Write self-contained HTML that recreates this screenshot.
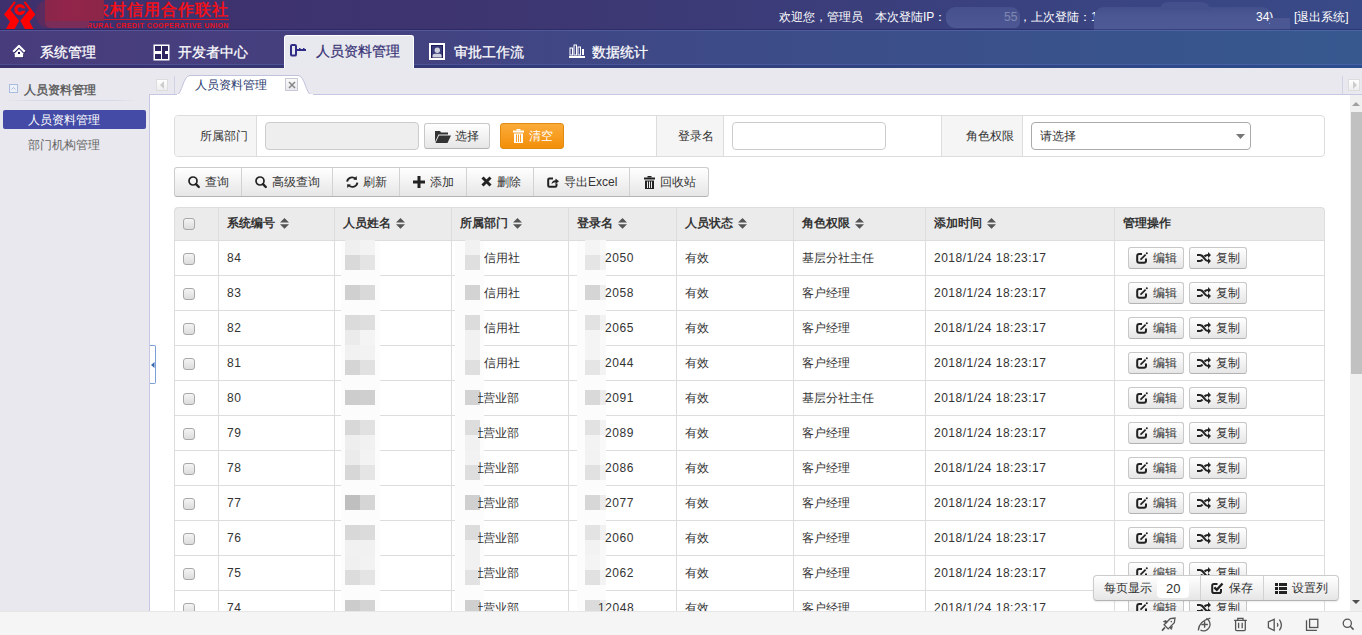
<!DOCTYPE html>
<html><head><meta charset="utf-8">
<style>
*{box-sizing:border-box;margin:0;padding:0}
body{width:1362px;height:635px;overflow:hidden;position:relative;font-family:"Liberation Sans",sans-serif;font-size:12px;color:#333;background:#fff}
.a{position:absolute}
#top{left:0;top:0;width:1362px;height:30px;background:linear-gradient(to right,#3e306d 0%,#3d3570 35%,#3a3f7c 65%,#394a88 100%)}
#nav{left:0;top:30px;width:1362px;height:38px;background:linear-gradient(to right,#483c7c 0%,#45407f 25%,#3d4a87 50%,#36588f 100%);border-top:1px solid rgba(120,135,215,.32)}
#nav .strip{left:0;top:33px;width:1362px;height:5px;background:linear-gradient(to right,#392f6c,#313f7c 50%,#2c4d8c);border-top:1px solid rgba(120,135,215,.35);border-bottom:1px solid rgba(10,20,80,.45)}
.nt{position:absolute;top:13px;color:#fff;font-size:14px;line-height:16px;white-space:nowrap;-webkit-text-stroke:0.25px #fff}
#side{left:0;top:68px;width:149px;height:543px;background:#e8e8ee}
#main{left:149px;top:68px;width:1213px;height:543px;background:#e8e8ee}
#status{left:0;top:611px;width:1362px;height:24px;background:#f5f5f5;border-top:1px solid #e6e6e6}
.btn{position:absolute;height:25px;border:1px solid #c8c8c8;border-bottom-color:#b3b3b3;border-radius:3px;background:linear-gradient(#ffffff,#e6e6e6);}
.lbl{position:absolute;white-space:nowrap;line-height:14px}
table{border-collapse:collapse}
</style></head><body>

<div id="top" class="a">
  <svg class="a" style="left:0;top:0" width="40" height="30" viewBox="0 0 40 30">
    <path d="M14.3 1.2 L15.8 2.6 L10.4 10 L19.2 20.7 L14.6 29 L6 29 L10 21.6 L4 14.6 Z" fill="#f00"/>
    <path d="M25.2 1.2 L23.7 2.6 L29.1 10 L20.3 20.7 L24.9 29 L33.5 29 L29.5 21.6 L35.5 14.6 Z" fill="#f00"/>
    <circle cx="19.9" cy="9.6" r="5.6" fill="#f00"/>
    <circle cx="19.9" cy="9.6" r="2.4" fill="#3f3371"/>
    <rect x="19.9" y="8.3" width="6" height="2.5" fill="#3f3371"/>
  </svg>
  <div class="a" style="left:93px;top:2px;color:#f0101a;font-size:16px;font-weight:bold;line-height:16px;letter-spacing:1px;white-space:nowrap">农村信用合作联社</div>
  <div class="a" style="left:44px;top:19px;width:185px;height:1px;background:#d8101f"></div>
  <div class="a" style="left:87px;top:22px;color:#e8101c;font-size:7px;font-weight:bold;line-height:7px;letter-spacing:0.42px;white-space:nowrap">RURAL CREDIT COOPERATIVE UNION</div>
  <div class="a" style="left:36px;top:0;width:28px;height:28px;border-radius:12px 0 0 12px;background:#5a2b5f"></div>
  <div class="a" style="left:45px;top:0;width:59px;height:21px;background:linear-gradient(90deg,#8a2649,#92244a 40%,#8c2648)"></div>
  <div class="a" style="left:45px;top:21px;width:44px;height:7px;background:#7a2d58;border-radius:0 0 4px 6px"></div>
  

  <div class="a" style="left:779px;top:10px;color:#fff;font-size:12px;line-height:14px;white-space:nowrap">欢迎您，管理员</div>
  <div class="a" style="left:875px;top:10px;color:#fff;font-size:12px;line-height:14px;white-space:nowrap">本次登陆IP：2</div>
  <div class="a" style="left:946px;top:7px;width:74px;height:21px;border-radius:9px 9px 6px 9px;background:linear-gradient(#45508c,#4c5794)"></div>
  <div class="a" style="left:1004px;top:10px;color:#fff;font-size:12px;line-height:14px;white-space:nowrap;opacity:.3">55</div>
  <div class="a" style="left:1019px;top:10px;color:#fff;font-size:12px;line-height:14px;white-space:nowrap">，上次登陆：1</div>
  <div class="a" style="left:1094px;top:7px;width:178px;height:23px;border-radius:10px 10px 0 0;background:linear-gradient(#44508b,#4b5793 40%,#4e5a95)"></div>
  <div class="a" style="left:1160px;top:2px;width:50px;height:8px;border-radius:8px 8px 0 0;background:#43508b"></div>
  <div class="a" style="left:1256px;top:10px;color:#fff;font-size:12px;line-height:14px;white-space:nowrap">34)</div>
  <div class="a" style="left:1270px;top:18px;width:20px;height:12px;background:#4b5792"></div>
  <div class="a" style="left:1294px;top:10px;color:#fff;font-size:12px;line-height:14px;white-space:nowrap">[退出系统]</div>
</div>

<div class="a" style="left:0;top:29px;width:1362px;height:1px;background:rgba(20,20,70,.35)"></div>
<div id="nav" class="a">
  <div class="a strip"></div>
  <!-- tab 1 -->
  <svg class="a" style="left:12px;top:44px;top:14px" width="15" height="15" viewBox="0 0 15 15"><g transform="translate(0.7,0.7)" fill="#1a1450"><path d="M1.2 6.8 L7 1 L12.8 6.8" fill="none" stroke="#1a1450" stroke-width="2.2"/><path d="M2.8 8.2 L7 4 L11.2 8.2 V12.2 H2.8 Z"/></g><path d="M1.2 6.8 L7 1 L12.8 6.8" fill="none" stroke="#fff" stroke-width="2.2"/><path d="M2.8 8.2 L7 4 L11.2 8.2 V12.2 H2.8 Z" fill="#fff"/><rect x="6" y="7" width="2" height="2" fill="#1a1450"/></svg>
  <div class="nt" style="left:40px">系统管理</div>
  <!-- tab 2 -->
  <svg class="a" style="left:153px;top:13px" width="17" height="17" viewBox="0 0 17 17"><rect x="0.5" y="0.5" width="16" height="16" fill="#fff"/><rect x="2" y="2" width="6" height="5" fill="#2c2460"/><rect x="2" y="10" width="6" height="5" fill="#2c2460"/><rect x="9" y="2" width="6" height="13" fill="#2c2460"/><rect x="12" y="7" width="3" height="3" fill="#fff"/></svg>
  <div class="nt" style="left:178px">开发者中心</div>
  <!-- active tab -->
  <div class="a" style="left:284px;top:4px;width:130px;height:34px;background:#e8e9ef;border:1px solid #fff;border-bottom:none;border-radius:3px 3px 0 0"></div>
  <svg class="a" style="left:290px;top:13px" width="17" height="13" viewBox="0 0 17 13"><rect x="1" y="1" width="5" height="10.6" rx="1.2" fill="none" stroke="#2f2c85" stroke-width="2"/><rect x="6" y="5" width="10" height="2" fill="#2f2c85"/><rect x="9" y="4" width="1.5" height="1.4" fill="#2f2c85"/><rect x="13" y="4" width="1.5" height="1.4" fill="#2f2c85"/></svg>
  <div class="nt" style="left:316px;top:12px;color:#3b3678;-webkit-text-stroke:0.25px #3b3678">人员资料管理</div>
  <!-- tab 4 -->
  <svg class="a" style="left:429px;top:12px" width="17" height="18" viewBox="0 0 17 18"><rect x="1" y="1" width="14" height="15" fill="#383a7a" stroke="#fff" stroke-width="2"/><rect x="2.5" y="2.5" width="11" height="12" fill="none" stroke="#1c1a55" stroke-width="1"/><circle cx="8.3" cy="7.2" r="2.7" fill="#cfd0de"/><path d="M3.5 14.5 V12.8 Q3.5 10.7 5.8 10.7 H10.5 Q12.7 10.7 12.7 12.8 V14.5 Z" fill="#cfd0de"/></svg>
  <div class="nt" style="left:454px">审批工作流</div>
  <!-- tab 5 -->
  <svg class="a" style="left:569px;top:13px" width="16" height="14" viewBox="0 0 16 14"><rect x="0" y="12" width="16" height="2" fill="#fff"/><rect x="1" y="4" width="2.5" height="7" fill="none" stroke="#fff" stroke-width="1"/><rect x="5" y="1" width="2.5" height="10" fill="none" stroke="#fff" stroke-width="1"/><rect x="9" y="3" width="2.5" height="8" fill="none" stroke="#fff" stroke-width="1"/><rect x="13" y="5" width="2" height="6" fill="#fff"/></svg>
  <div class="nt" style="left:592px">数据统计</div>
</div>

<div id="side" class="a">
  <div class="a" style="left:9px;top:16px;width:9px;height:9px;border:1px solid #a9bde0;background:#eef1f8"></div><svg class="a" style="left:11px;top:19px" width="5" height="3"><path d="M0.5 2.5 L2.5 0.5 L4.5 2.5" fill="none" stroke="#9aaed6" stroke-width="0.8"/></svg>
  <div class="lbl" style="left:24px;top:15px;color:#555;-webkit-text-stroke:0.35px #555">人员资料管理</div>
  <div class="a" style="left:7px;top:32px;width:132px;height:1px;background:linear-gradient(90deg,#e8e8ee,#d4d8e8 20%,#d4d8e8 80%,#e8e8ee)"></div>
  <div class="a" style="left:3px;top:42px;width:143px;height:19px;background:#434ba6;border-radius:2px"></div>
  <div class="lbl" style="left:28px;top:45px;color:#fff">人员资料管理</div>
  <div class="lbl" style="left:28px;top:70px;color:#666">部门机构管理</div>
</div>

<div id="main" class="a">
  <!-- tab strip -->
  <div class="a" style="left:0;top:26px;width:1213px;height:1px;background:#c5c8e0"></div>
  <div class="a" style="left:0;top:26px;width:1px;height:517px;background:#c5c8e0"></div>
  <div class="a" style="left:7px;top:11px;width:12px;height:12px;border:1px solid #ddd;background:linear-gradient(#fff,#eee)"></div>
  <svg class="a" style="left:10px;top:13px" width="6" height="8"><path d="M5 0 L1 4 L5 8Z" fill="#ccc"/></svg>
  <div class="a" style="left:25px;top:8px;width:1px;height:18px;background:#d0d3e4"></div>
  <svg class="a" style="left:28px;top:7px" width="136" height="20" viewBox="0 0 136 20"><path d="M0 19.5 C5 19.5 6 0.5 13 0.5 L121 0.5 C128 0.5 129 19.5 134 19.5" fill="#fff" stroke="#bfc3dc"/><rect x="0" y="19" width="136" height="1" fill="#fff"/></svg>
  <div class="lbl" style="left:46px;top:10px;color:#2b3a6e">人员资料管理</div>
  <div class="a" style="left:136px;top:10px;width:13px;height:13px;border:1px solid #c9c9d6;background:linear-gradient(#fafafa,#e8e8ee)"></div>
  <svg class="a" style="left:139px;top:13px" width="8" height="8"><path d="M1 1 L7 7 M7 1 L1 7" stroke="#888" stroke-width="1.6"/></svg>
  <div class="a" style="left:1193px;top:8px;width:1px;height:18px;background:#d0d3e4"></div>
  <div class="a" style="left:1199px;top:11px;width:12px;height:12px;border:1px solid #ddd;background:linear-gradient(#fff,#eee)"></div>
  <svg class="a" style="left:1203px;top:13px" width="6" height="8"><path d="M1 0 L5 4 L1 8Z" fill="#ccc"/></svg>

  <!-- white panel -->
  <div class="a" style="left:1px;top:27px;width:1200px;height:516px;background:#fff;overflow:hidden" id="panel">
<div class="a" style="left:24px;top:20px;width:1151px;height:42px;border:1px solid #ddd;border-radius:4px;overflow:hidden">
<div class="a" style="left:-1px;top:0;width:83px;height:40px;background:#f5f5f5;border-right:1px solid #ddd;border-left:none"></div>
<div class="lbl" style="left:-1px;width:74px;text-align:right;top:13px;color:#333">所属部门</div>
<div class="a" style="left:481px;top:0;width:68px;height:40px;background:#f5f5f5;border-right:1px solid #ddd;border-left:1px solid #ddd"></div>
<div class="lbl" style="left:481px;width:58px;text-align:right;top:13px;color:#333">登录名</div>
<div class="a" style="left:766px;top:0;width:82px;height:40px;background:#f5f5f5;border-right:1px solid #ddd;border-left:1px solid #ddd"></div>
<div class="lbl" style="left:766px;width:73px;text-align:right;top:13px;color:#333">角色权限</div>
</div>
<div class="a" style="left:115px;top:27px;width:154px;height:28px;background:#eee;border:1px solid #ccc;border-radius:4px"></div>
<div class="a" style="left:582px;top:27px;width:154px;height:28px;background:#fff;border:1px solid #ccc;border-radius:4px"></div>
<div class="a" style="left:881px;top:27px;width:220px;height:28px;background:#fff;border:1px solid #aaa;border-radius:4px"></div>
<div class="lbl" style="left:890px;top:34px;color:#333">请选择</div>
<svg class="a" style="left:1086px;top:39px" width="9" height="5"><path d="M0 0 L9 0 L4.5 5Z" fill="#777"/></svg>
<div class="btn" style="left:274px;top:28px;width:66px;height:26px"></div>
<svg class="a" style="left:285px;top:35px" width="16" height="13" viewBox="0 0 16 13"><path d="M0 1 L5 1 L6 2.5 L13 2.5 L13 4.5 L3.5 4.5 L0 12 Z" fill="#333"/><path d="M4 5.5 L16 5.5 L12.5 13 L0.5 13 Z" fill="#333"/></svg>
<div class="lbl" style="left:305px;top:34px;color:#333">选择</div>
<div class="a" style="left:350px;top:28px;width:64px;height:26px;border:1px solid #e08a10;border-radius:3px;background:linear-gradient(#fbab3a,#f38f0a)"></div>
<svg class="a" style="left:363px;top:34px" width="11" height="14" viewBox="0 0 11 14"><rect x="3.5" y="0" width="4" height="1.5" fill="#fff"/><rect x="0" y="1.5" width="11" height="2" fill="#fff"/><path d="M1 4.5 H10 V14 H1 Z" fill="#fff"/><rect x="3" y="5.5" width="1" height="7.5" fill="#f5a02a"/><rect x="5" y="5.5" width="1" height="7.5" fill="#f5a02a"/><rect x="7" y="5.5" width="1" height="7.5" fill="#f5a02a"/></svg>
<div class="lbl" style="left:379px;top:34px;color:#fff">清空</div>
<div class="a" style="left:24px;top:72px;width:535px;height:30px;border:1px solid #ccc;border-bottom-color:#b3b3b3;border-radius:3px;background:linear-gradient(#fff,#e6e6e6)"></div>
<div class="a" style="left:91px;top:73px;width:1px;height:28px;background:#d2d2d2"></div>
<div class="a" style="left:182px;top:73px;width:1px;height:28px;background:#d2d2d2"></div>
<div class="a" style="left:249px;top:73px;width:1px;height:28px;background:#d2d2d2"></div>
<div class="a" style="left:316px;top:73px;width:1px;height:28px;background:#d2d2d2"></div>
<div class="a" style="left:383px;top:73px;width:1px;height:28px;background:#d2d2d2"></div>
<div class="a" style="left:479px;top:73px;width:1px;height:28px;background:#d2d2d2"></div>
<svg class="a" style="left:38px;top:81px" width="13" height="13" viewBox="0 0 13 13"><circle cx="5" cy="5" r="4" fill="none" stroke="#222" stroke-width="1.7"/><path d="M8 8.2 L10.8 11" stroke="#222" stroke-width="2.4" stroke-linecap="round"/></svg>
<div class="lbl" style="left:55px;top:80px;color:#333">查询</div>
<svg class="a" style="left:105px;top:81px" width="13" height="13" viewBox="0 0 13 13"><circle cx="5" cy="5" r="4" fill="none" stroke="#222" stroke-width="1.7"/><path d="M8 8.2 L10.8 11" stroke="#222" stroke-width="2.4" stroke-linecap="round"/></svg>
<div class="lbl" style="left:122px;top:80px;color:#333">高级查询</div>
<svg class="a" style="left:196px;top:81px" width="13" height="13" viewBox="0 0 13 13"><path d="M1.1 5.6 A5 5 0 0 1 9.6 2.9" fill="none" stroke="#222" stroke-width="1.9"/><path d="M10.7 0 L10.9 3.9 L7.2 3.4Z" fill="#222"/><path d="M11.4 6.6 A5 5 0 0 1 2.9 9.3" fill="none" stroke="#222" stroke-width="1.9"/><path d="M1.3 12 L1.1 8.2 L4.8 8.6Z" fill="#222"/></svg>
<div class="lbl" style="left:213px;top:80px;color:#333">刷新</div>
<svg class="a" style="left:263px;top:81px" width="12" height="12" viewBox="0 0 12 12"><rect x="4.5" y="0" width="3" height="12" fill="#222"/><rect x="0" y="4.5" width="12" height="3" fill="#222"/></svg>
<div class="lbl" style="left:280px;top:80px;color:#333">添加</div>
<svg class="a" style="left:331px;top:81px" width="11" height="11" viewBox="0 0 11 11"><path d="M1.5 1.5 L9.5 9.5 M9.5 1.5 L1.5 9.5" stroke="#222" stroke-width="3"/></svg>
<div class="lbl" style="left:347px;top:80px;color:#333">删除</div>
<svg class="a" style="left:397px;top:81px" width="12" height="12" viewBox="0 0 12 12"><path d="M6 2.5 H2.5 Q1.2 2.5 1.2 3.8 V9.5 Q1.2 10.8 2.5 10.8 H8.2 Q9.5 10.8 9.5 9.5 V7.5" fill="none" stroke="#222" stroke-width="2"/><path d="M4.5 8 Q5 4.5 8.5 4.3 V2.5 L12 5.2 L8.5 8 V6.3 Q6.3 6.3 4.5 8Z" fill="#222"/></svg>
<div class="lbl" style="left:414px;top:80px;color:#333">导出Excel</div>
<svg class="a" style="left:494px;top:81px" width="11" height="13" viewBox="0 0 11 13"><rect x="3.5" y="0" width="4" height="1.5" fill="#222"/><rect x="0" y="1.5" width="11" height="2" fill="#222"/><path d="M1 4.5 H10 V13 H1 Z" fill="#222"/><rect x="3" y="5.5" width="1" height="6.5" fill="#eee"/><rect x="5" y="5.5" width="1" height="6.5" fill="#eee"/><rect x="7" y="5.5" width="1" height="6.5" fill="#eee"/></svg>
<div class="lbl" style="left:510px;top:80px;color:#333">回收站</div>
<div class="a" style="left:24px;top:112px;width:1151px;height:33px;background:#ebebeb;border-radius:4px 4px 0 0"></div>
<div class="a" style="left:24px;top:112px;width:1151px;height:800px;border:1px solid #ddd;border-radius:4px"></div>
<div class="a" style="left:68px;top:112px;width:1px;height:800px;background:#ddd"></div>
<div class="a" style="left:184px;top:112px;width:1px;height:800px;background:#ddd"></div>
<div class="a" style="left:301px;top:112px;width:1px;height:800px;background:#ddd"></div>
<div class="a" style="left:418px;top:112px;width:1px;height:800px;background:#ddd"></div>
<div class="a" style="left:526px;top:112px;width:1px;height:800px;background:#ddd"></div>
<div class="a" style="left:643px;top:112px;width:1px;height:800px;background:#ddd"></div>
<div class="a" style="left:775px;top:112px;width:1px;height:800px;background:#ddd"></div>
<div class="a" style="left:964px;top:112px;width:1px;height:800px;background:#ddd"></div>
<div class="a" style="left:24px;top:145px;width:1151px;height:1px;background:#ddd"></div>
<div class="a" style="left:24px;top:180px;width:1151px;height:1px;background:#ddd"></div>
<div class="a" style="left:24px;top:215px;width:1151px;height:1px;background:#ddd"></div>
<div class="a" style="left:24px;top:250px;width:1151px;height:1px;background:#ddd"></div>
<div class="a" style="left:24px;top:285px;width:1151px;height:1px;background:#ddd"></div>
<div class="a" style="left:24px;top:320px;width:1151px;height:1px;background:#ddd"></div>
<div class="a" style="left:24px;top:355px;width:1151px;height:1px;background:#ddd"></div>
<div class="a" style="left:24px;top:390px;width:1151px;height:1px;background:#ddd"></div>
<div class="a" style="left:24px;top:425px;width:1151px;height:1px;background:#ddd"></div>
<div class="a" style="left:24px;top:460px;width:1151px;height:1px;background:#ddd"></div>
<div class="a" style="left:24px;top:495px;width:1151px;height:1px;background:#ddd"></div>
<div class="a" style="left:24px;top:530px;width:1151px;height:1px;background:#ddd"></div>
<div class="a" style="left:33px;top:123px;width:12px;height:12px;border:1px solid #a8a8a8;border-radius:3px;background:linear-gradient(#f4f4f4,#dcdcdc)"></div>
<div class="lbl" style="left:77px;top:121px;color:#333;font-weight:bold">系统编号</div>
<svg class="a" style="left:130px;top:123px" width="9" height="11" viewBox="0 0 9 11"><path d="M4.5 0 L9 4.6 L0 4.6Z M0 6.2 L9 6.2 L4.5 10.8Z" fill="#555"/></svg>
<div class="lbl" style="left:193px;top:121px;color:#333;font-weight:bold">人员姓名</div>
<svg class="a" style="left:246px;top:123px" width="9" height="11" viewBox="0 0 9 11"><path d="M4.5 0 L9 4.6 L0 4.6Z M0 6.2 L9 6.2 L4.5 10.8Z" fill="#555"/></svg>
<div class="lbl" style="left:310px;top:121px;color:#333;font-weight:bold">所属部门</div>
<svg class="a" style="left:363px;top:123px" width="9" height="11" viewBox="0 0 9 11"><path d="M4.5 0 L9 4.6 L0 4.6Z M0 6.2 L9 6.2 L4.5 10.8Z" fill="#555"/></svg>
<div class="lbl" style="left:427px;top:121px;color:#333;font-weight:bold">登录名</div>
<svg class="a" style="left:468px;top:123px" width="9" height="11" viewBox="0 0 9 11"><path d="M4.5 0 L9 4.6 L0 4.6Z M0 6.2 L9 6.2 L4.5 10.8Z" fill="#555"/></svg>
<div class="lbl" style="left:535px;top:121px;color:#333;font-weight:bold">人员状态</div>
<svg class="a" style="left:588px;top:123px" width="9" height="11" viewBox="0 0 9 11"><path d="M4.5 0 L9 4.6 L0 4.6Z M0 6.2 L9 6.2 L4.5 10.8Z" fill="#555"/></svg>
<div class="lbl" style="left:652px;top:121px;color:#333;font-weight:bold">角色权限</div>
<svg class="a" style="left:705px;top:123px" width="9" height="11" viewBox="0 0 9 11"><path d="M4.5 0 L9 4.6 L0 4.6Z M0 6.2 L9 6.2 L4.5 10.8Z" fill="#555"/></svg>
<div class="lbl" style="left:784px;top:121px;color:#333;font-weight:bold">添加时间</div>
<svg class="a" style="left:837px;top:123px" width="9" height="11" viewBox="0 0 9 11"><path d="M4.5 0 L9 4.6 L0 4.6Z M0 6.2 L9 6.2 L4.5 10.8Z" fill="#555"/></svg>
<div class="lbl" style="left:973px;top:121px;color:#333;font-weight:bold">管理操作</div>
<div class="a" style="left:33px;top:158px;width:12px;height:12px;border:1px solid #a8a8a8;border-radius:3px;background:linear-gradient(#f4f4f4,#dcdcdc)"></div>
<div class="lbl" style="left:77px;top:156px;color:#333;letter-spacing:0.5px">84</div>
<div class="lbl" style="left:334px;top:156px;color:#333">信用社</div>
<div class="lbl" style="left:535px;top:156px;color:#333">有效</div>
<div class="lbl" style="left:652px;top:156px;color:#333">基层分社主任</div>
<div class="lbl" style="left:784px;top:156px;color:#333;letter-spacing:0.5px">2018/1/24 18:23:17</div>
<div class="btn" style="left:978px;top:152px;width:56px;height:22px"></div>
<svg class="a" style="left:986px;top:157px" width="12" height="12" viewBox="0 0 12 12"><path d="M6 2 H3.2 Q1.2 2 1.2 4 V8.8 Q1.2 10.8 3.2 10.8 H8 Q10 10.8 10 8.8 V6.5" fill="none" stroke="#222" stroke-width="2"/><path d="M4.8 7.4 L9.6 2.6" stroke="#222" stroke-width="1.7"/><path d="M4.2 8.2 L4.6 6.6 L5.6 7.6Z" fill="#222"/><circle cx="10.8" cy="1.3" r="1" fill="#222"/></svg>
<div class="lbl" style="left:1003px;top:156px;color:#333">编辑</div>
<div class="btn" style="left:1039px;top:152px;width:58px;height:22px"></div>
<svg class="a" style="left:1047px;top:157px" width="14" height="12" viewBox="0 0 14 12"><path d="M0 3 H3 Q5 3 7 6 Q9 9 11 9 H11.5" fill="none" stroke="#222" stroke-width="2.2"/><path d="M0 9 H3 Q4.5 9 5.5 7.5 M7.5 4.5 Q8.8 3 11 3 H11.5" fill="none" stroke="#222" stroke-width="2.2"/><path d="M11 0 L14 3 L11 6Z M11 6 L14 9 L11 12Z" fill="#222"/></svg>
<div class="lbl" style="left:1066px;top:156px;color:#333">复制</div>
<div class="a" style="left:33px;top:193px;width:12px;height:12px;border:1px solid #a8a8a8;border-radius:3px;background:linear-gradient(#f4f4f4,#dcdcdc)"></div>
<div class="lbl" style="left:77px;top:191px;color:#333;letter-spacing:0.5px">83</div>
<div class="lbl" style="left:334px;top:191px;color:#333">信用社</div>
<div class="lbl" style="left:535px;top:191px;color:#333">有效</div>
<div class="lbl" style="left:652px;top:191px;color:#333">客户经理</div>
<div class="lbl" style="left:784px;top:191px;color:#333;letter-spacing:0.5px">2018/1/24 18:23:17</div>
<div class="btn" style="left:978px;top:187px;width:56px;height:22px"></div>
<svg class="a" style="left:986px;top:192px" width="12" height="12" viewBox="0 0 12 12"><path d="M6 2 H3.2 Q1.2 2 1.2 4 V8.8 Q1.2 10.8 3.2 10.8 H8 Q10 10.8 10 8.8 V6.5" fill="none" stroke="#222" stroke-width="2"/><path d="M4.8 7.4 L9.6 2.6" stroke="#222" stroke-width="1.7"/><path d="M4.2 8.2 L4.6 6.6 L5.6 7.6Z" fill="#222"/><circle cx="10.8" cy="1.3" r="1" fill="#222"/></svg>
<div class="lbl" style="left:1003px;top:191px;color:#333">编辑</div>
<div class="btn" style="left:1039px;top:187px;width:58px;height:22px"></div>
<svg class="a" style="left:1047px;top:192px" width="14" height="12" viewBox="0 0 14 12"><path d="M0 3 H3 Q5 3 7 6 Q9 9 11 9 H11.5" fill="none" stroke="#222" stroke-width="2.2"/><path d="M0 9 H3 Q4.5 9 5.5 7.5 M7.5 4.5 Q8.8 3 11 3 H11.5" fill="none" stroke="#222" stroke-width="2.2"/><path d="M11 0 L14 3 L11 6Z M11 6 L14 9 L11 12Z" fill="#222"/></svg>
<div class="lbl" style="left:1066px;top:191px;color:#333">复制</div>
<div class="a" style="left:33px;top:228px;width:12px;height:12px;border:1px solid #a8a8a8;border-radius:3px;background:linear-gradient(#f4f4f4,#dcdcdc)"></div>
<div class="lbl" style="left:77px;top:226px;color:#333;letter-spacing:0.5px">82</div>
<div class="lbl" style="left:334px;top:226px;color:#333">信用社</div>
<div class="lbl" style="left:535px;top:226px;color:#333">有效</div>
<div class="lbl" style="left:652px;top:226px;color:#333">客户经理</div>
<div class="lbl" style="left:784px;top:226px;color:#333;letter-spacing:0.5px">2018/1/24 18:23:17</div>
<div class="btn" style="left:978px;top:222px;width:56px;height:22px"></div>
<svg class="a" style="left:986px;top:227px" width="12" height="12" viewBox="0 0 12 12"><path d="M6 2 H3.2 Q1.2 2 1.2 4 V8.8 Q1.2 10.8 3.2 10.8 H8 Q10 10.8 10 8.8 V6.5" fill="none" stroke="#222" stroke-width="2"/><path d="M4.8 7.4 L9.6 2.6" stroke="#222" stroke-width="1.7"/><path d="M4.2 8.2 L4.6 6.6 L5.6 7.6Z" fill="#222"/><circle cx="10.8" cy="1.3" r="1" fill="#222"/></svg>
<div class="lbl" style="left:1003px;top:226px;color:#333">编辑</div>
<div class="btn" style="left:1039px;top:222px;width:58px;height:22px"></div>
<svg class="a" style="left:1047px;top:227px" width="14" height="12" viewBox="0 0 14 12"><path d="M0 3 H3 Q5 3 7 6 Q9 9 11 9 H11.5" fill="none" stroke="#222" stroke-width="2.2"/><path d="M0 9 H3 Q4.5 9 5.5 7.5 M7.5 4.5 Q8.8 3 11 3 H11.5" fill="none" stroke="#222" stroke-width="2.2"/><path d="M11 0 L14 3 L11 6Z M11 6 L14 9 L11 12Z" fill="#222"/></svg>
<div class="lbl" style="left:1066px;top:226px;color:#333">复制</div>
<div class="a" style="left:33px;top:263px;width:12px;height:12px;border:1px solid #a8a8a8;border-radius:3px;background:linear-gradient(#f4f4f4,#dcdcdc)"></div>
<div class="lbl" style="left:77px;top:261px;color:#333;letter-spacing:0.5px">81</div>
<div class="lbl" style="left:334px;top:261px;color:#333">信用社</div>
<div class="lbl" style="left:535px;top:261px;color:#333">有效</div>
<div class="lbl" style="left:652px;top:261px;color:#333">客户经理</div>
<div class="lbl" style="left:784px;top:261px;color:#333;letter-spacing:0.5px">2018/1/24 18:23:17</div>
<div class="btn" style="left:978px;top:257px;width:56px;height:22px"></div>
<svg class="a" style="left:986px;top:262px" width="12" height="12" viewBox="0 0 12 12"><path d="M6 2 H3.2 Q1.2 2 1.2 4 V8.8 Q1.2 10.8 3.2 10.8 H8 Q10 10.8 10 8.8 V6.5" fill="none" stroke="#222" stroke-width="2"/><path d="M4.8 7.4 L9.6 2.6" stroke="#222" stroke-width="1.7"/><path d="M4.2 8.2 L4.6 6.6 L5.6 7.6Z" fill="#222"/><circle cx="10.8" cy="1.3" r="1" fill="#222"/></svg>
<div class="lbl" style="left:1003px;top:261px;color:#333">编辑</div>
<div class="btn" style="left:1039px;top:257px;width:58px;height:22px"></div>
<svg class="a" style="left:1047px;top:262px" width="14" height="12" viewBox="0 0 14 12"><path d="M0 3 H3 Q5 3 7 6 Q9 9 11 9 H11.5" fill="none" stroke="#222" stroke-width="2.2"/><path d="M0 9 H3 Q4.5 9 5.5 7.5 M7.5 4.5 Q8.8 3 11 3 H11.5" fill="none" stroke="#222" stroke-width="2.2"/><path d="M11 0 L14 3 L11 6Z M11 6 L14 9 L11 12Z" fill="#222"/></svg>
<div class="lbl" style="left:1066px;top:261px;color:#333">复制</div>
<div class="a" style="left:33px;top:298px;width:12px;height:12px;border:1px solid #a8a8a8;border-radius:3px;background:linear-gradient(#f4f4f4,#dcdcdc)"></div>
<div class="lbl" style="left:77px;top:296px;color:#333;letter-spacing:0.5px">80</div>
<div class="lbl" style="left:333px;top:296px;color:#333">营业部</div>
<div class="lbl" style="left:535px;top:296px;color:#333">有效</div>
<div class="lbl" style="left:652px;top:296px;color:#333">基层分社主任</div>
<div class="lbl" style="left:784px;top:296px;color:#333;letter-spacing:0.5px">2018/1/24 18:23:17</div>
<div class="btn" style="left:978px;top:292px;width:56px;height:22px"></div>
<svg class="a" style="left:986px;top:297px" width="12" height="12" viewBox="0 0 12 12"><path d="M6 2 H3.2 Q1.2 2 1.2 4 V8.8 Q1.2 10.8 3.2 10.8 H8 Q10 10.8 10 8.8 V6.5" fill="none" stroke="#222" stroke-width="2"/><path d="M4.8 7.4 L9.6 2.6" stroke="#222" stroke-width="1.7"/><path d="M4.2 8.2 L4.6 6.6 L5.6 7.6Z" fill="#222"/><circle cx="10.8" cy="1.3" r="1" fill="#222"/></svg>
<div class="lbl" style="left:1003px;top:296px;color:#333">编辑</div>
<div class="btn" style="left:1039px;top:292px;width:58px;height:22px"></div>
<svg class="a" style="left:1047px;top:297px" width="14" height="12" viewBox="0 0 14 12"><path d="M0 3 H3 Q5 3 7 6 Q9 9 11 9 H11.5" fill="none" stroke="#222" stroke-width="2.2"/><path d="M0 9 H3 Q4.5 9 5.5 7.5 M7.5 4.5 Q8.8 3 11 3 H11.5" fill="none" stroke="#222" stroke-width="2.2"/><path d="M11 0 L14 3 L11 6Z M11 6 L14 9 L11 12Z" fill="#222"/></svg>
<div class="lbl" style="left:1066px;top:296px;color:#333">复制</div>
<div class="a" style="left:33px;top:333px;width:12px;height:12px;border:1px solid #a8a8a8;border-radius:3px;background:linear-gradient(#f4f4f4,#dcdcdc)"></div>
<div class="lbl" style="left:77px;top:331px;color:#333;letter-spacing:0.5px">79</div>
<div class="lbl" style="left:333px;top:331px;color:#333">营业部</div>
<div class="lbl" style="left:535px;top:331px;color:#333">有效</div>
<div class="lbl" style="left:652px;top:331px;color:#333">客户经理</div>
<div class="lbl" style="left:784px;top:331px;color:#333;letter-spacing:0.5px">2018/1/24 18:23:17</div>
<div class="btn" style="left:978px;top:327px;width:56px;height:22px"></div>
<svg class="a" style="left:986px;top:332px" width="12" height="12" viewBox="0 0 12 12"><path d="M6 2 H3.2 Q1.2 2 1.2 4 V8.8 Q1.2 10.8 3.2 10.8 H8 Q10 10.8 10 8.8 V6.5" fill="none" stroke="#222" stroke-width="2"/><path d="M4.8 7.4 L9.6 2.6" stroke="#222" stroke-width="1.7"/><path d="M4.2 8.2 L4.6 6.6 L5.6 7.6Z" fill="#222"/><circle cx="10.8" cy="1.3" r="1" fill="#222"/></svg>
<div class="lbl" style="left:1003px;top:331px;color:#333">编辑</div>
<div class="btn" style="left:1039px;top:327px;width:58px;height:22px"></div>
<svg class="a" style="left:1047px;top:332px" width="14" height="12" viewBox="0 0 14 12"><path d="M0 3 H3 Q5 3 7 6 Q9 9 11 9 H11.5" fill="none" stroke="#222" stroke-width="2.2"/><path d="M0 9 H3 Q4.5 9 5.5 7.5 M7.5 4.5 Q8.8 3 11 3 H11.5" fill="none" stroke="#222" stroke-width="2.2"/><path d="M11 0 L14 3 L11 6Z M11 6 L14 9 L11 12Z" fill="#222"/></svg>
<div class="lbl" style="left:1066px;top:331px;color:#333">复制</div>
<div class="a" style="left:33px;top:368px;width:12px;height:12px;border:1px solid #a8a8a8;border-radius:3px;background:linear-gradient(#f4f4f4,#dcdcdc)"></div>
<div class="lbl" style="left:77px;top:366px;color:#333;letter-spacing:0.5px">78</div>
<div class="lbl" style="left:333px;top:366px;color:#333">营业部</div>
<div class="lbl" style="left:535px;top:366px;color:#333">有效</div>
<div class="lbl" style="left:652px;top:366px;color:#333">客户经理</div>
<div class="lbl" style="left:784px;top:366px;color:#333;letter-spacing:0.5px">2018/1/24 18:23:17</div>
<div class="btn" style="left:978px;top:362px;width:56px;height:22px"></div>
<svg class="a" style="left:986px;top:367px" width="12" height="12" viewBox="0 0 12 12"><path d="M6 2 H3.2 Q1.2 2 1.2 4 V8.8 Q1.2 10.8 3.2 10.8 H8 Q10 10.8 10 8.8 V6.5" fill="none" stroke="#222" stroke-width="2"/><path d="M4.8 7.4 L9.6 2.6" stroke="#222" stroke-width="1.7"/><path d="M4.2 8.2 L4.6 6.6 L5.6 7.6Z" fill="#222"/><circle cx="10.8" cy="1.3" r="1" fill="#222"/></svg>
<div class="lbl" style="left:1003px;top:366px;color:#333">编辑</div>
<div class="btn" style="left:1039px;top:362px;width:58px;height:22px"></div>
<svg class="a" style="left:1047px;top:367px" width="14" height="12" viewBox="0 0 14 12"><path d="M0 3 H3 Q5 3 7 6 Q9 9 11 9 H11.5" fill="none" stroke="#222" stroke-width="2.2"/><path d="M0 9 H3 Q4.5 9 5.5 7.5 M7.5 4.5 Q8.8 3 11 3 H11.5" fill="none" stroke="#222" stroke-width="2.2"/><path d="M11 0 L14 3 L11 6Z M11 6 L14 9 L11 12Z" fill="#222"/></svg>
<div class="lbl" style="left:1066px;top:366px;color:#333">复制</div>
<div class="a" style="left:33px;top:403px;width:12px;height:12px;border:1px solid #a8a8a8;border-radius:3px;background:linear-gradient(#f4f4f4,#dcdcdc)"></div>
<div class="lbl" style="left:77px;top:401px;color:#333;letter-spacing:0.5px">77</div>
<div class="lbl" style="left:333px;top:401px;color:#333">营业部</div>
<div class="lbl" style="left:535px;top:401px;color:#333">有效</div>
<div class="lbl" style="left:652px;top:401px;color:#333">客户经理</div>
<div class="lbl" style="left:784px;top:401px;color:#333;letter-spacing:0.5px">2018/1/24 18:23:17</div>
<div class="btn" style="left:978px;top:397px;width:56px;height:22px"></div>
<svg class="a" style="left:986px;top:402px" width="12" height="12" viewBox="0 0 12 12"><path d="M6 2 H3.2 Q1.2 2 1.2 4 V8.8 Q1.2 10.8 3.2 10.8 H8 Q10 10.8 10 8.8 V6.5" fill="none" stroke="#222" stroke-width="2"/><path d="M4.8 7.4 L9.6 2.6" stroke="#222" stroke-width="1.7"/><path d="M4.2 8.2 L4.6 6.6 L5.6 7.6Z" fill="#222"/><circle cx="10.8" cy="1.3" r="1" fill="#222"/></svg>
<div class="lbl" style="left:1003px;top:401px;color:#333">编辑</div>
<div class="btn" style="left:1039px;top:397px;width:58px;height:22px"></div>
<svg class="a" style="left:1047px;top:402px" width="14" height="12" viewBox="0 0 14 12"><path d="M0 3 H3 Q5 3 7 6 Q9 9 11 9 H11.5" fill="none" stroke="#222" stroke-width="2.2"/><path d="M0 9 H3 Q4.5 9 5.5 7.5 M7.5 4.5 Q8.8 3 11 3 H11.5" fill="none" stroke="#222" stroke-width="2.2"/><path d="M11 0 L14 3 L11 6Z M11 6 L14 9 L11 12Z" fill="#222"/></svg>
<div class="lbl" style="left:1066px;top:401px;color:#333">复制</div>
<div class="a" style="left:33px;top:438px;width:12px;height:12px;border:1px solid #a8a8a8;border-radius:3px;background:linear-gradient(#f4f4f4,#dcdcdc)"></div>
<div class="lbl" style="left:77px;top:436px;color:#333;letter-spacing:0.5px">76</div>
<div class="lbl" style="left:333px;top:436px;color:#333">营业部</div>
<div class="lbl" style="left:535px;top:436px;color:#333">有效</div>
<div class="lbl" style="left:652px;top:436px;color:#333">客户经理</div>
<div class="lbl" style="left:784px;top:436px;color:#333;letter-spacing:0.5px">2018/1/24 18:23:17</div>
<div class="btn" style="left:978px;top:432px;width:56px;height:22px"></div>
<svg class="a" style="left:986px;top:437px" width="12" height="12" viewBox="0 0 12 12"><path d="M6 2 H3.2 Q1.2 2 1.2 4 V8.8 Q1.2 10.8 3.2 10.8 H8 Q10 10.8 10 8.8 V6.5" fill="none" stroke="#222" stroke-width="2"/><path d="M4.8 7.4 L9.6 2.6" stroke="#222" stroke-width="1.7"/><path d="M4.2 8.2 L4.6 6.6 L5.6 7.6Z" fill="#222"/><circle cx="10.8" cy="1.3" r="1" fill="#222"/></svg>
<div class="lbl" style="left:1003px;top:436px;color:#333">编辑</div>
<div class="btn" style="left:1039px;top:432px;width:58px;height:22px"></div>
<svg class="a" style="left:1047px;top:437px" width="14" height="12" viewBox="0 0 14 12"><path d="M0 3 H3 Q5 3 7 6 Q9 9 11 9 H11.5" fill="none" stroke="#222" stroke-width="2.2"/><path d="M0 9 H3 Q4.5 9 5.5 7.5 M7.5 4.5 Q8.8 3 11 3 H11.5" fill="none" stroke="#222" stroke-width="2.2"/><path d="M11 0 L14 3 L11 6Z M11 6 L14 9 L11 12Z" fill="#222"/></svg>
<div class="lbl" style="left:1066px;top:436px;color:#333">复制</div>
<div class="a" style="left:33px;top:473px;width:12px;height:12px;border:1px solid #a8a8a8;border-radius:3px;background:linear-gradient(#f4f4f4,#dcdcdc)"></div>
<div class="lbl" style="left:77px;top:471px;color:#333;letter-spacing:0.5px">75</div>
<div class="lbl" style="left:333px;top:471px;color:#333">营业部</div>
<div class="lbl" style="left:535px;top:471px;color:#333">有效</div>
<div class="lbl" style="left:652px;top:471px;color:#333">客户经理</div>
<div class="lbl" style="left:784px;top:471px;color:#333;letter-spacing:0.5px">2018/1/24 18:23:17</div>
<div class="btn" style="left:978px;top:467px;width:56px;height:22px"></div>
<svg class="a" style="left:986px;top:472px" width="12" height="12" viewBox="0 0 12 12"><path d="M6 2 H3.2 Q1.2 2 1.2 4 V8.8 Q1.2 10.8 3.2 10.8 H8 Q10 10.8 10 8.8 V6.5" fill="none" stroke="#222" stroke-width="2"/><path d="M4.8 7.4 L9.6 2.6" stroke="#222" stroke-width="1.7"/><path d="M4.2 8.2 L4.6 6.6 L5.6 7.6Z" fill="#222"/><circle cx="10.8" cy="1.3" r="1" fill="#222"/></svg>
<div class="lbl" style="left:1003px;top:471px;color:#333">编辑</div>
<div class="btn" style="left:1039px;top:467px;width:58px;height:22px"></div>
<svg class="a" style="left:1047px;top:472px" width="14" height="12" viewBox="0 0 14 12"><path d="M0 3 H3 Q5 3 7 6 Q9 9 11 9 H11.5" fill="none" stroke="#222" stroke-width="2.2"/><path d="M0 9 H3 Q4.5 9 5.5 7.5 M7.5 4.5 Q8.8 3 11 3 H11.5" fill="none" stroke="#222" stroke-width="2.2"/><path d="M11 0 L14 3 L11 6Z M11 6 L14 9 L11 12Z" fill="#222"/></svg>
<div class="lbl" style="left:1066px;top:471px;color:#333">复制</div>
<div class="a" style="left:33px;top:508px;width:12px;height:12px;border:1px solid #a8a8a8;border-radius:3px;background:linear-gradient(#f4f4f4,#dcdcdc)"></div>
<div class="lbl" style="left:77px;top:506px;color:#333;letter-spacing:0.5px">74</div>
<div class="lbl" style="left:333px;top:506px;color:#333">营业部</div>
<div class="lbl" style="left:535px;top:506px;color:#333">有效</div>
<div class="lbl" style="left:652px;top:506px;color:#333">客户经理</div>
<div class="lbl" style="left:784px;top:506px;color:#333;letter-spacing:0.5px">2018/1/24 18:23:17</div>
<div class="btn" style="left:978px;top:502px;width:56px;height:22px"></div>
<svg class="a" style="left:986px;top:507px" width="12" height="12" viewBox="0 0 12 12"><path d="M6 2 H3.2 Q1.2 2 1.2 4 V8.8 Q1.2 10.8 3.2 10.8 H8 Q10 10.8 10 8.8 V6.5" fill="none" stroke="#222" stroke-width="2"/><path d="M4.8 7.4 L9.6 2.6" stroke="#222" stroke-width="1.7"/><path d="M4.2 8.2 L4.6 6.6 L5.6 7.6Z" fill="#222"/><circle cx="10.8" cy="1.3" r="1" fill="#222"/></svg>
<div class="lbl" style="left:1003px;top:506px;color:#333">编辑</div>
<div class="btn" style="left:1039px;top:502px;width:58px;height:22px"></div>
<svg class="a" style="left:1047px;top:507px" width="14" height="12" viewBox="0 0 14 12"><path d="M0 3 H3 Q5 3 7 6 Q9 9 11 9 H11.5" fill="none" stroke="#222" stroke-width="2.2"/><path d="M0 9 H3 Q4.5 9 5.5 7.5 M7.5 4.5 Q8.8 3 11 3 H11.5" fill="none" stroke="#222" stroke-width="2.2"/><path d="M11 0 L14 3 L11 6Z M11 6 L14 9 L11 12Z" fill="#222"/></svg>
<div class="lbl" style="left:1066px;top:506px;color:#333">复制</div>
<div class="a" style="left:191px;top:146px;width:39px;height:370px;background:#fcfcfc"></div>
<div class="a" style="left:305px;top:146px;width:29px;height:370px;background:#fcfcfc"></div>
<div class="a" style="left:427px;top:146px;width:29px;height:370px;background:#fcfcfc"></div>
<div class="a" style="left:195px;top:145px;width:15px;height:15px;background:#efefef"></div>
<div class="a" style="left:210px;top:145px;width:15px;height:15px;background:#f3f3f3"></div>
<div class="a" style="left:315px;top:145px;width:15px;height:15px;background:#f1f1f1"></div>
<div class="a" style="left:435px;top:145px;width:15px;height:15px;background:#f4f4f4"></div>
<div class="a" style="left:450px;top:145px;width:6px;height:15px;background:#f9f9f9"></div>
<div class="a" style="left:195px;top:160px;width:15px;height:15px;background:#d9d9d9"></div>
<div class="a" style="left:210px;top:160px;width:15px;height:15px;background:#e4e4e4"></div>
<div class="a" style="left:315px;top:160px;width:15px;height:15px;background:#dfdfdf"></div>
<div class="a" style="left:435px;top:160px;width:15px;height:15px;background:#e5e5e5"></div>
<div class="a" style="left:450px;top:160px;width:6px;height:15px;background:#f2f2f2"></div>
<div class="a" style="left:195px;top:190px;width:15px;height:15px;background:#d0d0d0"></div>
<div class="a" style="left:210px;top:190px;width:15px;height:15px;background:#d9d9d9"></div>
<div class="a" style="left:315px;top:190px;width:15px;height:15px;background:#d3d3d3"></div>
<div class="a" style="left:435px;top:190px;width:15px;height:15px;background:#d5d5d5"></div>
<div class="a" style="left:450px;top:190px;width:6px;height:15px;background:#eeeeee"></div>
<div class="a" style="left:195px;top:220px;width:15px;height:15px;background:#dbdbdb"></div>
<div class="a" style="left:210px;top:220px;width:15px;height:15px;background:#dedede"></div>
<div class="a" style="left:315px;top:220px;width:15px;height:15px;background:#dcdcdc"></div>
<div class="a" style="left:435px;top:220px;width:15px;height:15px;background:#e2e2e2"></div>
<div class="a" style="left:450px;top:220px;width:6px;height:15px;background:#f2f2f2"></div>
<div class="a" style="left:195px;top:235px;width:15px;height:15px;background:#ebebeb"></div>
<div class="a" style="left:210px;top:235px;width:15px;height:15px;background:#f4f4f4"></div>
<div class="a" style="left:315px;top:235px;width:15px;height:15px;background:#f1f1f1"></div>
<div class="a" style="left:435px;top:235px;width:15px;height:15px;background:#f4f4f4"></div>
<div class="a" style="left:450px;top:235px;width:6px;height:15px;background:#fafafa"></div>
<div class="a" style="left:195px;top:250px;width:15px;height:15px;background:#f1f1f1"></div>
<div class="a" style="left:210px;top:250px;width:15px;height:15px;background:#f2f2f2"></div>
<div class="a" style="left:315px;top:250px;width:15px;height:15px;background:#f1f1f1"></div>
<div class="a" style="left:435px;top:250px;width:15px;height:15px;background:#f4f4f4"></div>
<div class="a" style="left:450px;top:250px;width:6px;height:15px;background:#f9f9f9"></div>
<div class="a" style="left:195px;top:265px;width:15px;height:15px;background:#d5d5d5"></div>
<div class="a" style="left:210px;top:265px;width:15px;height:15px;background:#e1e1e1"></div>
<div class="a" style="left:315px;top:265px;width:15px;height:15px;background:#dfdfdf"></div>
<div class="a" style="left:435px;top:265px;width:15px;height:15px;background:#e5e5e5"></div>
<div class="a" style="left:450px;top:265px;width:6px;height:15px;background:#f3f3f3"></div>
<div class="a" style="left:195px;top:295px;width:15px;height:15px;background:#cdcdcd"></div>
<div class="a" style="left:210px;top:295px;width:15px;height:15px;background:#cfcfcf"></div>
<div class="a" style="left:315px;top:295px;width:15px;height:15px;background:#d3d3d3"></div>
<div class="a" style="left:435px;top:295px;width:15px;height:15px;background:#d9d9d9"></div>
<div class="a" style="left:450px;top:295px;width:6px;height:15px;background:#ececec"></div>
<div class="a" style="left:195px;top:325px;width:15px;height:15px;background:#d8d8d8"></div>
<div class="a" style="left:210px;top:325px;width:15px;height:15px;background:#e1e1e1"></div>
<div class="a" style="left:315px;top:325px;width:15px;height:15px;background:#dddddd"></div>
<div class="a" style="left:435px;top:325px;width:15px;height:15px;background:#e2e2e2"></div>
<div class="a" style="left:450px;top:325px;width:6px;height:15px;background:#f2f2f2"></div>
<div class="a" style="left:195px;top:340px;width:15px;height:15px;background:#eeeeee"></div>
<div class="a" style="left:210px;top:340px;width:15px;height:15px;background:#f1f1f1"></div>
<div class="a" style="left:315px;top:340px;width:15px;height:15px;background:#f1f1f1"></div>
<div class="a" style="left:435px;top:340px;width:15px;height:15px;background:#f3f3f3"></div>
<div class="a" style="left:450px;top:340px;width:6px;height:15px;background:#f9f9f9"></div>
<div class="a" style="left:195px;top:355px;width:15px;height:15px;background:#ebebeb"></div>
<div class="a" style="left:210px;top:355px;width:15px;height:15px;background:#f3f3f3"></div>
<div class="a" style="left:315px;top:355px;width:15px;height:15px;background:#f2f2f2"></div>
<div class="a" style="left:435px;top:355px;width:15px;height:15px;background:#f2f2f2"></div>
<div class="a" style="left:450px;top:355px;width:6px;height:15px;background:#fafafa"></div>
<div class="a" style="left:195px;top:370px;width:15px;height:15px;background:#d7d7d7"></div>
<div class="a" style="left:210px;top:370px;width:15px;height:15px;background:#e5e5e5"></div>
<div class="a" style="left:315px;top:370px;width:15px;height:15px;background:#dedede"></div>
<div class="a" style="left:435px;top:370px;width:15px;height:15px;background:#e1e1e1"></div>
<div class="a" style="left:450px;top:370px;width:6px;height:15px;background:#f1f1f1"></div>
<div class="a" style="left:195px;top:400px;width:15px;height:15px;background:#bfbfbf"></div>
<div class="a" style="left:210px;top:400px;width:15px;height:15px;background:#d5d5d5"></div>
<div class="a" style="left:315px;top:400px;width:15px;height:15px;background:#d0d0d0"></div>
<div class="a" style="left:435px;top:400px;width:15px;height:15px;background:#d7d7d7"></div>
<div class="a" style="left:450px;top:400px;width:6px;height:15px;background:#ececec"></div>
<div class="a" style="left:195px;top:430px;width:15px;height:15px;background:#d8d8d8"></div>
<div class="a" style="left:210px;top:430px;width:15px;height:15px;background:#dbdbdb"></div>
<div class="a" style="left:315px;top:430px;width:15px;height:15px;background:#dcdcdc"></div>
<div class="a" style="left:435px;top:430px;width:15px;height:15px;background:#e3e3e3"></div>
<div class="a" style="left:450px;top:430px;width:6px;height:15px;background:#f1f1f1"></div>
<div class="a" style="left:195px;top:445px;width:15px;height:15px;background:#f1f1f1"></div>
<div class="a" style="left:210px;top:445px;width:15px;height:15px;background:#f1f1f1"></div>
<div class="a" style="left:315px;top:445px;width:15px;height:15px;background:#f1f1f1"></div>
<div class="a" style="left:435px;top:445px;width:15px;height:15px;background:#f2f2f2"></div>
<div class="a" style="left:450px;top:445px;width:6px;height:15px;background:#f9f9f9"></div>
<div class="a" style="left:195px;top:460px;width:15px;height:15px;background:#f0f0f0"></div>
<div class="a" style="left:210px;top:460px;width:15px;height:15px;background:#f2f2f2"></div>
<div class="a" style="left:315px;top:460px;width:15px;height:15px;background:#f1f1f1"></div>
<div class="a" style="left:435px;top:460px;width:15px;height:15px;background:#f4f4f4"></div>
<div class="a" style="left:450px;top:460px;width:6px;height:15px;background:#f9f9f9"></div>
<div class="a" style="left:195px;top:475px;width:15px;height:15px;background:#dcdcdc"></div>
<div class="a" style="left:210px;top:475px;width:15px;height:15px;background:#e4e4e4"></div>
<div class="a" style="left:315px;top:475px;width:15px;height:15px;background:#e2e2e2"></div>
<div class="a" style="left:435px;top:475px;width:15px;height:15px;background:#e1e1e1"></div>
<div class="a" style="left:450px;top:475px;width:6px;height:15px;background:#f3f3f3"></div>
<div class="a" style="left:195px;top:505px;width:15px;height:11px;background:#cccccc"></div>
<div class="a" style="left:210px;top:505px;width:15px;height:11px;background:#d4d4d4"></div>
<div class="a" style="left:315px;top:505px;width:15px;height:11px;background:#cfcfcf"></div>
<div class="a" style="left:435px;top:505px;width:15px;height:11px;background:#dbdbdb"></div>
<div class="a" style="left:450px;top:505px;width:6px;height:11px;background:#ececec"></div>
<div class="lbl" style="left:455px;top:156px;color:#333;letter-spacing:0.6px">2050</div>
<div class="lbl" style="left:455px;top:191px;color:#333;letter-spacing:0.6px">2058</div>
<div class="lbl" style="left:455px;top:226px;color:#333;letter-spacing:0.6px">2065</div>
<div class="lbl" style="left:455px;top:261px;color:#333;letter-spacing:0.6px">2044</div>
<div class="lbl" style="left:455px;top:296px;color:#333;letter-spacing:0.6px">2091</div>
<div class="lbl" style="left:455px;top:331px;color:#333;letter-spacing:0.6px">2089</div>
<div class="lbl" style="left:455px;top:366px;color:#333;letter-spacing:0.6px">2086</div>
<div class="lbl" style="left:455px;top:401px;color:#333;letter-spacing:0.6px">2077</div>
<div class="lbl" style="left:455px;top:436px;color:#333;letter-spacing:0.6px">2060</div>
<div class="lbl" style="left:455px;top:471px;color:#333;letter-spacing:0.6px">2062</div>
<div class="lbl" style="left:448px;top:506px;color:#333;letter-spacing:0.6px">12048</div>
<div class="a" style="left:328px;top:296px;width:6px;height:14px;overflow:hidden"><div class="lbl" style="left:-6px;top:0;color:#333">社</div></div>
<div class="a" style="left:328px;top:331px;width:6px;height:14px;overflow:hidden"><div class="lbl" style="left:-6px;top:0;color:#333">社</div></div>
<div class="a" style="left:328px;top:366px;width:6px;height:14px;overflow:hidden"><div class="lbl" style="left:-6px;top:0;color:#333">社</div></div>
<div class="a" style="left:328px;top:401px;width:6px;height:14px;overflow:hidden"><div class="lbl" style="left:-6px;top:0;color:#333">社</div></div>
<div class="a" style="left:328px;top:436px;width:6px;height:14px;overflow:hidden"><div class="lbl" style="left:-6px;top:0;color:#333">社</div></div>
<div class="a" style="left:328px;top:471px;width:6px;height:14px;overflow:hidden"><div class="lbl" style="left:-6px;top:0;color:#333">社</div></div>
<div class="a" style="left:328px;top:506px;width:6px;height:14px;overflow:hidden"><div class="lbl" style="left:-6px;top:0;color:#333">社</div></div>
<div class="a" style="left:943px;top:480px;width:246px;height:26px;border:1px solid #ccc;border-bottom-color:#b3b3b3;border-radius:4px;background:linear-gradient(#fff,#e6e6e6);box-shadow:0 1px 2px rgba(0,0,0,.08)"></div>
<div class="a" style="left:1050px;top:481px;width:1px;height:24px;background:#d2d2d2"></div>
<div class="a" style="left:1113px;top:481px;width:1px;height:24px;background:#d2d2d2"></div>
<div class="lbl" style="left:954px;top:486px;color:#333">每页显示</div>
<div class="a" style="left:1007px;top:484px;width:32px;height:19px;background:#fff;border-radius:4px"></div>
<div class="lbl" style="left:1016px;top:487px;color:#333;font-size:13px">20</div>
<svg class="a" style="left:1061px;top:487px" width="13" height="13" viewBox="0 0 13 13"><path d="M6.5 2 H3 Q1.2 2 1.2 3.8 V9.2 Q1.2 11 3 11 H8.3 Q10 11 10 9.2 V7" fill="none" stroke="#222" stroke-width="2"/><path d="M3.3 5.3 L5.8 7.8 L11.5 1.5" fill="none" stroke="#222" stroke-width="2.4"/></svg>
<div class="lbl" style="left:1079px;top:486px;color:#333">保存</div>
<svg class="a" style="left:1125px;top:488px" width="12" height="11" viewBox="0 0 12 11"><rect x="0" y="0" width="3" height="3" fill="#222"/><rect x="4" y="0" width="8" height="3" fill="#222"/><rect x="0" y="4" width="3" height="3" fill="#222"/><rect x="4" y="4" width="8" height="3" fill="#222"/><rect x="0" y="8" width="3" height="3" fill="#222"/><rect x="4" y="8" width="8" height="3" fill="#222"/></svg>
<div class="lbl" style="left:1142px;top:486px;color:#333">设置列</div>
  </div>
  <!-- scrollbar -->
  <div class="a" style="left:1201px;top:27px;width:12px;height:516px;background:#f0f0f0"></div>
  <svg class="a" style="left:1202px;top:33px" width="10" height="6"><path d="M1 5 L5 1 L9 5Z" fill="#a0a0a0"/></svg>
  <div class="a" style="left:1202px;top:44px;width:11px;height:262px;background:#c1c1c1"></div>
  <svg class="a" style="left:1202px;top:531px" width="10" height="6"><path d="M1 1 L5 5 L9 1Z" fill="#505050"/></svg>
</div>

<div class="a" style="left:150px;top:345px;width:6px;height:39px;background:#fff;border:1px solid #7ba0d8;border-left:none;border-radius:0 2px 2px 0"></div>
<svg class="a" style="left:151px;top:362px" width="4" height="6"><path d="M3.5 0 L0 3 L3.5 6Z" fill="#3a6ab0"/></svg>
<div id="status" class="a">
<svg class="a" style="left:1155px;top:0px" width="207" height="24" viewBox="0 0 207 24" fill="none" stroke="#555" stroke-width="1.3">
 <path d="M20 6 L19.3 10.8 L13.2 16.9 L9.1 12.8 L15.2 6.7 Z"/>
 <path d="M8.3 9.6 L11 8.4 L12 11 Z M14.8 15.4 L17.4 14.4 L16.3 17.6 Z" fill="#555" stroke-width="0.8"/>
 <circle cx="16.3" cy="9.6" r="0.8" fill="#555" stroke="none"/>
 <path d="M10 15.4 L7 18.6" stroke-width="1.6"/>
 <path d="M51.4 6.4 A6 6 0 1 1 45.5 18.2"/>
 <path d="M43.3 18.4 Q44 9 55.4 6.2"/>
 <path d="M49.6 9.2 V15.8 M46.3 12.5 H52.9" stroke-width="1.4"/>
 <path d="M79.1 8.4 H91.8 M82.8 8.4 V6.3 H88 V8.4"/>
 <path d="M80.6 8.6 V17.5 Q80.6 18.6 81.7 18.6 H89.2 Q90.3 18.6 90.3 17.5 V8.6"/>
 <path d="M83.6 10.8 V16.2 M87.2 10.8 V16.2"/>
 <path d="M113.4 9.8 L119.2 7.3 L119.2 18.5 L113.4 15.6 Z"/>
 <path d="M122.2 11.2 Q123.6 12.9 122.2 14.6"/>
 <path d="M124.4 7.6 Q128.4 12.9 124.4 18.4"/>
 <rect x="154.6" y="7.3" width="8.2" height="8.2"/>
 <path d="M151.5 8.3 V18.4 H161.9"/>
 <circle cx="192.3" cy="11.3" r="4.1"/>
 <path d="M195.3 14.3 L198.6 17.6" stroke-width="1.5"/>
</svg>
</div>

</body></html>
